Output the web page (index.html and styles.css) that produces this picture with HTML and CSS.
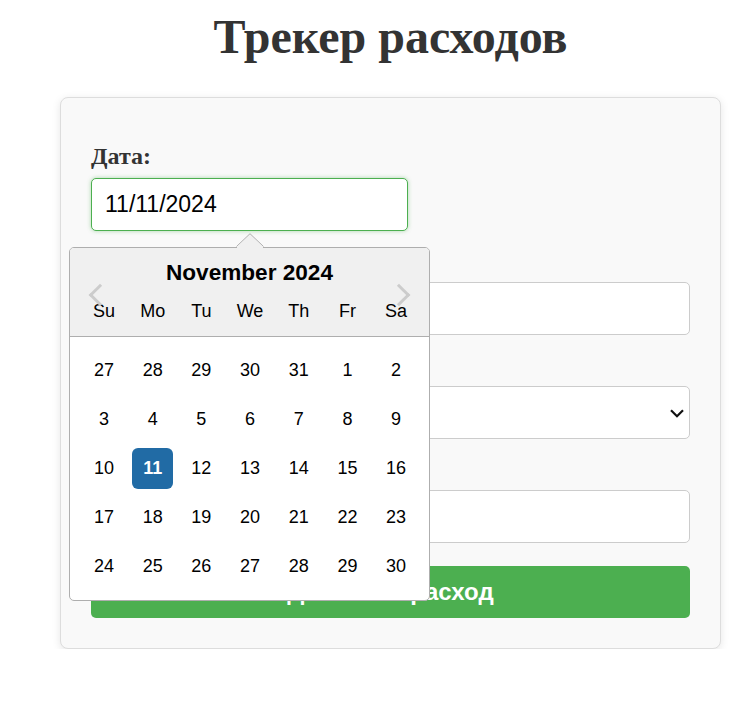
FILE: index.html
```html
<!DOCTYPE html>
<html lang="ru">
<head>
<meta charset="utf-8">
<title>Трекер расходов</title>
<link rel="stylesheet" href="styles.css">
</head>
<body>
<div class="app">
  <h1 class="title">Трекер расходов</h1>
  <form class="card">
    <div class="field">
      <label class="field-label">Дата:</label>
      <div class="date-wrap">
        <input class="input input-date" type="text" value="11/11/2024">
        <div class="calendar">
          <svg class="cal-arrow" width="28" height="16" viewBox="0 0 28 16">
            <polygon points="1,14 14,1.2 27,14 27,16 1,16" fill="#f0f0f0"/>
            <polyline points="0.5,13.5 14,0.7 27.5,13.5" fill="none" stroke="#aeaeae" stroke-width="1"/>
          </svg>
          <span class="nav nav-prev"></span>
          <span class="nav nav-next"></span>
          <div class="cal-header">
            <div class="cal-month">November 2024</div>
            <div class="cal-daynames">
              <span>Su</span><span>Mo</span><span>Tu</span><span>We</span><span>Th</span><span>Fr</span><span>Sa</span>
            </div>
          </div>
          <div class="cal-days">
            <span>27</span><span>28</span><span>29</span><span>30</span><span>31</span><span>1</span><span>2</span>
            <span>3</span><span>4</span><span>5</span><span>6</span><span>7</span><span>8</span><span>9</span>
            <span>10</span><span class="selected">11</span><span>12</span><span>13</span><span>14</span><span>15</span><span>16</span>
            <span>17</span><span>18</span><span>19</span><span>20</span><span>21</span><span>22</span><span>23</span>
            <span>24</span><span>25</span><span>26</span><span>27</span><span>28</span><span>29</span><span>30</span>
          </div>
        </div>
      </div>
    </div>
    <div class="field">
      <label class="field-label">Описание:</label>
      <input class="input" type="text" value="">
    </div>
    <div class="field">
      <label class="field-label">Категория:</label>
      <div class="select-wrap">
        <select class="input input-select">
          <option>Еда</option>
        </select>
        <svg class="select-chevron" width="14" height="9" viewBox="0 0 14 9">
          <polyline points="1,1.2 7,7.2 13,1.2" fill="none" stroke="#111111" stroke-width="2.2"/>
        </svg>
      </div>
    </div>
    <div class="field">
      <label class="field-label">Сумма:</label>
      <input class="input" type="text" value="">
    </div>
    <button class="submit" type="button">Добавить расход</button>
  </form>
</div>
</body>
</html>
```

FILE: styles.css
```css
html, body {
  margin: 0;
  padding: 0;
  background: #ffffff;
}

body {
  font-family: "Liberation Serif", "Times New Roman", serif;
  color: #333333;
}

.app {
  width: 661px;
  margin-left: 60px;
  padding-top: 10px;
}

.title {
  margin: 0 0 34px;
  font-size: 48px;
  line-height: 53px;
  font-weight: bold;
  text-align: center;
  color: #333333;
}

.card {
  display: block;
  margin: 0;
  background: #f9f9f9;
  border: 1px solid #dddddd;
  border-radius: 8px;
  padding: 47px 30px 30px;
  box-shadow: 0 2px 8px rgba(0, 0, 0, 0.1);
}

.field {
  margin-bottom: 18px;
}

.field-label {
  display: block;
  font-size: 24px;
  line-height: 22px;
  font-weight: bold;
  color: #333333;
  margin-bottom: 11px;
}

.input {
  display: block;
  box-sizing: border-box;
  width: 100%;
  height: 53px;
  margin: 0;
  padding: 0 13px;
  font-family: "Liberation Sans", Arial, sans-serif;
  font-size: 23px;
  color: #000000;
  background: #ffffff;
  border: 1px solid #cccccc;
  border-radius: 5px;
  outline: none;
}

.select-wrap {
  position: relative;
}

.input-select {
  -webkit-appearance: none;
  appearance: none;
  padding-right: 30px;
}

.select-chevron {
  position: absolute;
  right: 6px;
  top: 23px;
  display: block;
}

.date-wrap {
  position: relative;
  width: 317px;
}

.input-date {
  border-color: #4caf50;
  box-shadow: 0 0 4px rgba(76, 175, 80, 0.45);
}

.calendar {
  position: absolute;
  left: -22px;
  top: 69px;
  z-index: 5;
  width: 359px;
  background: #ffffff;
  border: 1px solid #aeaeae;
  border-radius: 5px;
  font-family: "Liberation Sans", Arial, sans-serif;
  color: #000000;
}

.cal-arrow {
  position: absolute;
  left: 166px;
  top: -15px;
  display: block;
}

.nav {
  position: absolute;
  top: 39px;
  width: 13px;
  height: 13px;
  border-style: solid;
  border-color: #cccccc;
  border-width: 3.5px 3.5px 0 0;
  z-index: 2;
}

.nav-prev {
  left: 22px;
  transform: rotate(225deg);
}

.nav-next {
  left: 321px;
  transform: rotate(45deg);
}

.cal-header {
  background: #f0f0f0;
  border-bottom: 1px solid #aeaeae;
  border-radius: 4px 4px 0 0;
  padding-top: 11px;
}

.cal-month {
  text-align: center;
  font-size: 22.6px;
  line-height: 28px;
  font-weight: bold;
}

.cal-daynames,
.cal-days {
  display: grid;
  grid-template-columns: repeat(7, 40.8px);
  column-gap: 7.9px;
}

.cal-daynames {
  padding: 4px 0 4px 13.6px;
}

.cal-days {
  row-gap: 8px;
  grid-auto-rows: 40.8px;
  padding: 13.6px 0 13.6px 13.6px;
}

.cal-daynames span,
.cal-days span {
  display: block;
  text-align: center;
  font-size: 18px;
  line-height: 40.8px;
  height: 40.8px;
  border-radius: 6px;
}

.cal-days .selected {
  background: #216ba5;
  color: #ffffff;
  font-weight: bold;
}

.submit {
  display: block;
  width: 100%;
  height: 52px;
  margin-top: 23px;
  padding: 0;
  border: none;
  border-radius: 5px;
  background: #4caf50;
  color: #ffffff;
  font-family: "Liberation Sans", Arial, sans-serif;
  font-size: 24px;
  font-weight: bold;
}
```
